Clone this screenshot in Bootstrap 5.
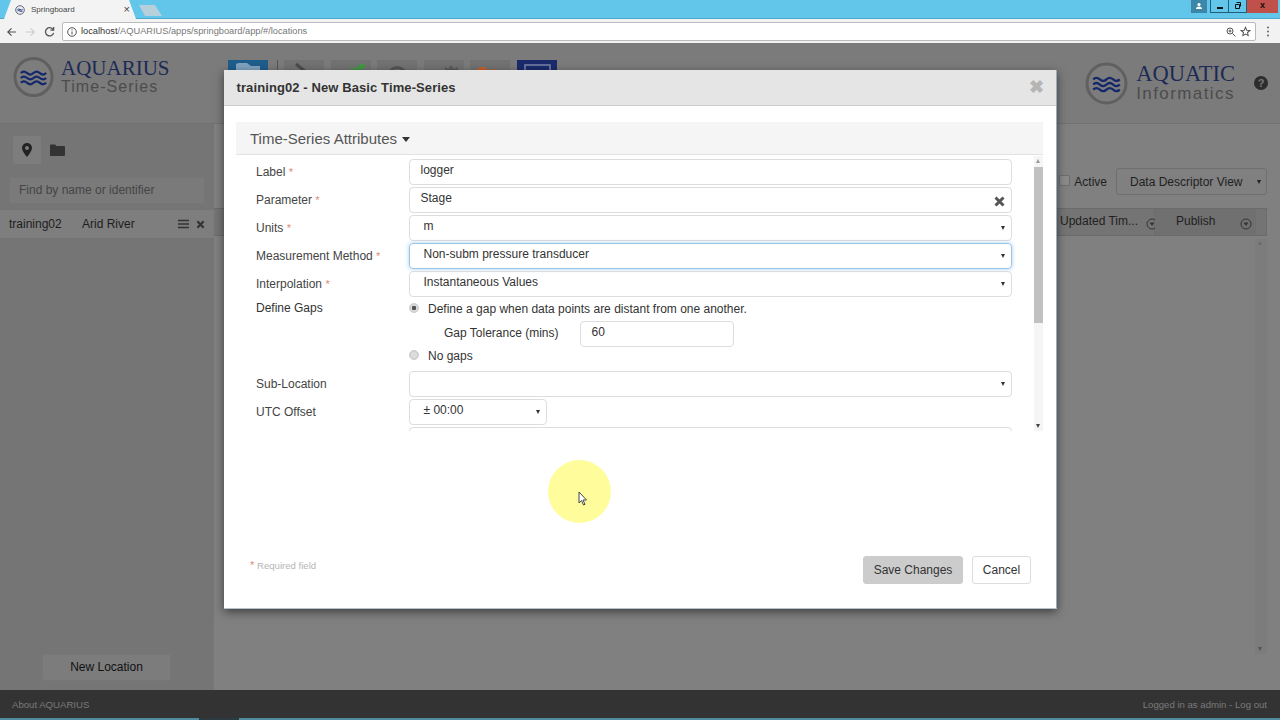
<!DOCTYPE html>
<html lang="en"><head><meta charset="utf-8"><title>Springboard</title>
<link href="https://cdn.jsdelivr.net/npm/bootstrap@5.3.0/dist/css/bootstrap.min.css" rel="stylesheet">
<style>
html,body{height:720px;overflow:hidden}
body{font-family:"Liberation Sans",Arial,sans-serif;font-size:12px;color:#333;background:#808080;position:relative}
.tabstrip{height:19px;background:#62c6ea;position:relative;border-bottom:1px solid #4fa9cc}
.tab1{width:132px;height:19px;background:#f3f3f3;margin-left:4px;clip-path:polygon(0 100%,7px 0,125px 0,132px 100%);font-size:8px;color:#444;gap:6px;padding-left:11px}
.tabx{margin-left:auto;margin-right:6px;font-size:11px;color:#444}
.tab2{width:23px;height:11px;background:#b6cfdc;margin:5px 0 0 3px;clip-path:polygon(0 0,16px 0,23px 100%,6px 100%)}
.winbtns{position:absolute;right:2px;top:0;height:13px}
.wb{height:13px;width:18px;border:1px solid #1f5f7c;border-top:0;border-left-width:0;color:#111;font-size:9px;line-height:11px;text-align:center}
.wb-min{width:19px;border-left-width:1px}
.wb-user{width:16px;background:#3c87a8;border:0;margin-right:3px}
.wb-x{width:31px;background:#c0504a;border:0;font-weight:700}
.toolbar{height:24px;background:#f2f2f2;gap:8px;padding:1px 10px 0 6px}
.addr{flex:1;height:19px;background:#fff;border:1px solid #bbb;border-radius:2px;font-size:9.25px;color:#777;gap:4px;padding:0 4px;margin:0 2px 0 -1px}
.addr b{font-weight:400;color:#333}
.appmain{height:675px;position:relative;background:#808080}
.topbar{height:81px;flex:none;background:#7b7b7b;border-bottom:1px solid #717171;padding:0 12px 0 13px}
.brand-l{width:215px;flex:none;gap:7px;align-self:flex-start;padding-top:13px}
.brand-txt{padding-top:3px}
.brand-r{gap:8px}
.brand-t{font-family:"Liberation Serif",serif;font-size:21px;line-height:18px;color:#1d2a55}
.brand-s{font-size:16px;line-height:19px;letter-spacing:1.05px;color:#4c4c4c}
.brand-t2{font-family:"Liberation Serif",serif;font-size:22.5px;line-height:21px;color:#1d2a55}
.brand-s2{font-size:17px;line-height:20px;letter-spacing:1.4px;color:#4c4c4c}
.tiles{align-self:flex-start;padding-top:17px;gap:6.6px}
.tile{width:40px;height:40px;background:#727272;display:block}
.tile-b{background:#1f5d8c}
.tile-n{background:#1b2a6b}
.tsep{width:1px;height:20px;background:#555;margin:0 -.6px 0 2.4px}
.helpi{width:14px;height:14px;border-radius:50%;background:#2d2d2d;color:#7b7b7b;font-size:11px;font-weight:700;line-height:14px;text-align:center;margin-left:19px}
.bodywrap{height:566px;flex:none}
.sidebar{width:214px;flex:none;background:#757575;padding-top:12px;position:relative}
.sidetabs{padding-left:13px;gap:9px}
.stab{width:28px;height:28px;background:#7d7d7d;border-radius:2px}
.findbox{margin:13px 9px 6px;height:27px;background:#7a7a7a;border:1px solid #767676;border-radius:2px;color:#454545;padding:0 9px;line-height:25px}
.locrow{height:28px;background:#7e7e7e;padding:0 9px;color:#1d1d1d}
.locrow .nm{width:73px}
.x-s{margin-left:7px}
.newloc{position:absolute;left:42px;top:530px;width:129px;height:27px;background:#7c7c7c;border:1px solid #777;border-radius:2px;color:#111;text-align:center;line-height:25px}
.mainarea{flex:1;padding:44px 13px 0 0;align-items:flex-end}
.rtools{gap:4px;color:#1f1f1f}
.cb{width:11px;height:11px;background:#8a8a8a;border:1px solid #6d6d6d;border-radius:2px;margin-bottom:3px}
.ddv{width:151px;height:27px;border:1px solid #6f6f6f;border-radius:3px;padding:0 5px 0 13px;color:#1f1f1f;margin-left:5px}
.arrow-d{width:0;height:0;border:2.500px solid transparent;border-top:4px solid #222;border-bottom:0}
.gridhead{width:100%;height:28px;margin-top:13px;background:#747474;border:1px solid #6b6b6b;border-left:0;color:#1f1f1f;justify-content:flex-end;white-space:nowrap}
.gc1{width:95px;height:100%;padding-top:3px;border-right:1px solid #6c6c6c;flex:none}
.gc2{width:101px;height:100%;padding:3px 4px 0 21px;background:#707070;margin-right:10px;flex:none}
.filt{width:12px;height:12px;margin-top:6px;flex:none}
.vscroll{width:12px;height:415px;margin-top:3px;background:#7c7c7c;position:relative}
.va{position:absolute;left:3px;width:0;height:0;border:2.5px solid transparent}
.va-t{top:2px;border-bottom:4px solid #6a6a6a;border-top:0}
.va-b{bottom:3px;border-top:4px solid #555;border-bottom:0}
.footerbar{height:28px;flex:none;background:#333;color:#7a7a7a;font-size:9.6px;padding:2px 13px 0 12px}
.bstrip{height:2px;background:#4f8c9f}
.bchip{width:40px;height:2px;margin-left:199px;background:#2c3a42}
.dlg{position:absolute;left:224px;top:70px;width:833px;height:539px;background:#fff;box-shadow:0 3px 9px rgba(0,0,0,.5);border-bottom:1px solid #b5c3cc;border-right:1px solid #9ab}
.dlg-h{height:36px;background:#e5e5e5;border-bottom:1px solid #ccc;padding:0 12px 0 12.5px}
.dlg-h h5{font-size:13px;font-weight:700;margin:0;color:#333;letter-spacing:.1px}
.xbig{color:#b5b5b5;font-size:18px;font-weight:700;line-height:1;margin-top:-2px}
.sect{margin:16px 13px 0 12px;height:33px;background:#f5f5f5;border-bottom:1px solid #e3e3e3;font-size:15px;color:#555;padding:3px 0 0 14px;gap:5px}
.caretd{width:0;height:0;border:4.5px solid transparent;border-top:5px solid #333;border-bottom:0}
.scroller{height:275px;margin:1px 13px 0 12px;overflow:hidden;position:relative}
.rowf{height:28px;padding-left:20px;color:#444}
.lbl{width:153px;flex:none;padding-top:7px}
.lbl-g{padding-top:3px}
.req{color:#e0897a;font-size:11px}
.fbox{width:603px;height:26px;border:1px solid #ddd;border-radius:4px;padding:0 7px 4px 10.5px;color:#333;line-height:20px;position:relative;margin-top:3px}
.sel{padding-left:13.5px}
.focusb{border-color:#9cc4e4;box-shadow:0 0 4px rgba(102,175,233,.6)}
.arrow{position:absolute;right:6px;top:10px;width:0;height:0;border:2.500px solid transparent;border-top:4px solid #333;border-bottom:0}
.clear-x{position:absolute;right:6px;top:8px}
.radio{width:10px;height:10px;border-radius:50%;background:#ddd;border:1px solid #ccc;flex:none;box-shadow:inset 0 0 1px #999;margin-bottom:2px}
.radio-on{background:radial-gradient(circle,#555 0 2px,#e4e4e4 2.6px)}
.gaprow{padding-left:20px;color:#333;height:72px}
.grd{gap:9px}
.gr1{margin-top:4px}
.gr2{margin-top:3px}
.gtl{margin-left:35px;width:136px;margin-bottom:2px}
.gapin{width:154px;margin-top:0;padding-bottom:2px}
.utcb{width:138px}
.scrollb{position:absolute;right:0;top:0;width:9px;height:275px;background:#f5f5f5}
.sthumb{position:absolute;left:0;top:11px;width:9px;height:156px;background:#c1c1c1}
.sarr{position:absolute;left:2px;width:0;height:0;border:2.5px solid transparent}
.sarr-t{top:3px;border-bottom:4px solid #999;border-top:0}
.sarr-b{bottom:3px;border-top:4px solid #444;border-bottom:0}
.dlg-f{position:absolute;left:26px;right:0;top:486px;padding-right:25px}
.reqnote{font-size:9.6px;color:#b5b5b5;margin-top:-10px}
.btn-save{width:100px;height:28px;background:#ccc;border:1px solid #ccc;border-radius:3px;font-size:12px;color:#333;padding:0}
.btn-canc{width:59px;height:28px;background:#fff;border:1px solid #ddd;border-radius:3px;font-size:12px;color:#333;padding:0;margin-left:9px}
.spot{position:absolute;left:548px;top:460px;width:63px;height:63px;border-radius:50%;background:#fffc9c;filter:blur(.6px)}
.cursor{position:absolute;left:578px;top:491px}
</style></head><body>
<div class="tabstrip d-flex">
  <div class="tab1 d-flex align-items-center"><svg width="10" height="10" viewBox="0 0 10 10"><circle cx="5" cy="5" r="4.300" fill="#e8eef4" stroke="#667" stroke-width="1"/><path d="M2.500 4.500q1-1 2.500 0t2.500 0M2.500 6q1-1 2.500 0t2.500 0" stroke="#237" fill="none"/></svg><span>Springboard</span><span class="tabx">×</span></div>
  <div class="tab2"></div>
  <div class="winbtns d-flex">
    <div class="wb wb-user"><svg width="8" height="8" viewBox="0 0 8 8"><circle cx="4" cy="2.500" r="1.600" fill="#fff"/><path d="M1 7q0-2.500 3-2.500T7 7z" fill="#fff"/></svg></div>
    <div class="wb wb-min"><svg width="8" height="9" viewBox="0 0 8 9"><rect x="1" y="6" width="6" height="2" fill="#111"/></svg></div>
    <div class="wb"><svg width="8" height="9" viewBox="0 0 8 9"><path d="M2.500 1.500h4v4M1.500 3.500h4v4h-4z" fill="none" stroke="#111"/></svg></div>
    <div class="wb wb-x">x</div>
  </div>
</div>
<div class="toolbar d-flex align-items-center">
  <svg width="11" height="12" viewBox="0 0 12 12"><path d="M11 6H2M6 2L2 6l4 4" fill="none" stroke="#555" stroke-width="1.300"/></svg>
  <svg width="11" height="12" viewBox="0 0 12 12"><path d="M1 6h9M6 2l4 4-4 4" fill="none" stroke="#ccc" stroke-width="1.300"/></svg>
  <svg width="11" height="11" viewBox="0 0 12 12"><path d="M10 4A4.500 4.500 0 1 0 10.500 7.500M10.500 1v3.500H7" fill="none" stroke="#555" stroke-width="1.400"/></svg>
  <div class="addr d-flex align-items-center"><svg width="10" height="10" viewBox="0 0 10 10"><circle cx="5" cy="5" r="4.300" fill="none" stroke="#555"/><path d="M5 4.500v3M5 2.300v1.200" stroke="#555"/></svg><span><b>localhost</b>/AQUARIUS/apps/springboard/app/#/locations</span>
    <svg class="ms-auto" width="10" height="10" viewBox="0 0 10 10"><circle cx="4" cy="4" r="3" fill="none" stroke="#555"/><path d="M6.500 6.500L9.500 9.500M2.500 4h3M4 2.500v3" stroke="#555"/></svg>
    <svg width="11" height="11" viewBox="0 0 24 24"><path d="M12 3l2.700 6.200 6.800.6-5.100 4.500 1.500 6.600L12 17.400 6.100 20.900l1.500-6.600L2.500 9.800l6.800-.6z" fill="none" stroke="#555" stroke-width="2.200"/></svg>
  </div>
  <svg width="4" height="11" viewBox="0 0 4 11"><circle cx="2" cy="1.500" r="1" fill="#666"/><circle cx="2" cy="5.500" r="1" fill="#666"/><circle cx="2" cy="9.500" r="1" fill="#666"/></svg>
</div>
<div class="appmain d-flex flex-column">
  <div class="topbar d-flex align-items-center">
    <div class="brand-l d-flex align-items-start">
      <svg width="41" height="42" viewBox="0 0 42 42"><circle cx="21" cy="21" r="19" fill="#7d7d7d" stroke="#606060" stroke-width="3"/><path d="M8 17q3-3 6.500 0t6.500 0 6.500 0 6.500 0M8 22q3-3 6.500 0t6.500 0 6.500 0 6.500 0M8 27q3-3 6.500 0t6.500 0 6.500 0 6.500 0" fill="none" stroke="#14276b" stroke-width="2.200"/></svg>
      <div class="brand-txt"><div class="brand-t">AQUARIUS</div><div class="brand-s">Time-Series</div></div>
    </div>
    <div class="tiles d-flex align-items-start">
      <svg class="tile tile-b" viewBox="0 0 40 40"><path d="M8 5q0-2 3-2h8l4 3h9v5H8z" fill="#7fa3bf"/></svg>
      <div class="tsep"></div>
      <svg class="tile" viewBox="0 0 40 40"><path d="M12 4l10 8" stroke="#4c4c4c" stroke-width="3"/></svg>
      <svg class="tile" viewBox="0 0 40 40"><circle cx="26" cy="9" r="2.500" fill="#3f9a3f"/><circle cx="31" cy="6.500" r="3" fill="#3f9a3f"/><circle cx="21" cy="9.500" r="1.500" fill="#3f9a3f"/></svg>
      <svg class="tile" viewBox="0 0 40 40"><path d="M11 14q9-13 19 0" fill="none" stroke="#555" stroke-width="3"/></svg>
      <svg class="tile" viewBox="0 0 40 40"><path d="M21 12V7l3 2 3-4 3 4 4-2v5z" fill="#5a5a5a"/></svg>
      <svg class="tile" viewBox="0 0 40 40"><path d="M6 12q1-5 8-5l4 3 9-1-4 4H6z" fill="#c9602a"/></svg>
      <svg class="tile tile-n" viewBox="0 0 40 40"><rect x="8" y="5" width="25" height="15" fill="none" stroke="#7c86ad" stroke-width="1.500"/></svg>
    </div>
    <div class="brand-r d-flex align-items-center ms-auto">
      <svg width="43" height="43" viewBox="0 0 42 42"><circle cx="21" cy="21" r="19" fill="#7d7d7d" stroke="#606060" stroke-width="3"/><path d="M8 17q3-3 6.500 0t6.500 0 6.500 0 6.500 0M8 22q3-3 6.500 0t6.500 0 6.500 0 6.500 0M8 27q3-3 6.500 0t6.500 0 6.500 0 6.500 0" fill="none" stroke="#14276b" stroke-width="2.200"/></svg>
      <div><div class="brand-t2">AQUATIC</div><div class="brand-s2">Informatics</div></div>
    </div>
    <div class="helpi">?</div>
  </div>
  <div class="bodywrap d-flex">
    <div class="sidebar">
      <div class="sidetabs d-flex align-items-center">
        <div class="stab d-flex align-items-center justify-content-center"><svg width="10" height="14" viewBox="0 0 10 14"><path fill-rule="evenodd" d="M5 0a5 5 0 0 1 5 5c0 3-5 9-5 9S0 8 0 5a5 5 0 0 1 5-5zm0 3a2 2 0 1 0 0 4 2 2 0 0 0 0-4z" fill="#222"/></svg></div>
        <svg width="15" height="12" viewBox="0 0 15 12"><path d="M0 1.500Q0 .500 1 .500h4l1.500 1.500H14q1 0 1 1V11q0 1-1 1H1q-1 0-1-1z" fill="#333"/></svg>
      </div>
      <div class="findbox">Find by name or identifier</div>
      <div class="locrow d-flex align-items-center"><span class="nm">training02</span><span>Arid River</span>
        <svg class="ms-auto" width="11" height="10" viewBox="0 0 11 10"><path d="M0 1.500h11M0 5h11M0 8.500h11" stroke="#333" stroke-width="1.600"/></svg>
        <svg class="x-s" width="9" height="9" viewBox="0 0 10 10"><path d="M1.500 1.500l7 7M8.500 1.500l-7 7" stroke="#333" stroke-width="2.400"/></svg>
      </div>
      <div class="newloc">New Location</div>
    </div>
    <div class="mainarea d-flex flex-column">
      <div class="rtools d-flex align-items-center"><span class="cb"></span><span>Active</span>
        <div class="ddv d-flex align-items-center justify-content-between"><span>Data Descriptor View</span><span class="arrow-d"></span></div>
      </div>
      <div class="gridhead d-flex">
        <div class="gc1 d-flex align-items-start gap-2"><span>Updated Tim...</span>
        <svg class="filt" viewBox="0 0 12 12"><circle cx="6" cy="6" r="5" fill="none" stroke="#333"/><path d="M3.500 4.500h5L6 8z" fill="#333"/></svg></div>
        <div class="gc2 d-flex align-items-start justify-content-between"><span>Publish</span>
        <svg class="filt" viewBox="0 0 12 12"><circle cx="6" cy="6" r="5" fill="none" stroke="#333"/><path d="M3.500 4.500h5L6 8z" fill="#333"/></svg></div>
      </div>
      <div class="vscroll"><span class="va va-t"></span><span class="va va-b"></span></div>
    </div>
  </div>
  <div class="footerbar d-flex align-items-center justify-content-between"><span>About AQUARIUS</span><span>Logged in as admin - Log out</span></div>
</div>
<div class="bstrip"><div class="bchip"></div></div>

<div class="dlg">
  <div class="dlg-h d-flex align-items-center justify-content-between"><h5>training02 - New Basic Time-Series</h5><span class="xbig">✖</span></div>
  <div class="sect d-flex align-items-center"><span>Time-Series Attributes</span><span class="caretd"></span></div>
  <div class="scroller">
    <div class="rowf d-flex"><div class="lbl">Label <span class="req">*</span></div><div class="fbox">logger</div></div>
    <div class="rowf d-flex"><div class="lbl">Parameter <span class="req">*</span></div><div class="fbox">Stage<svg class="clear-x" width="11" height="11" viewBox="0 0 11 11"><path d="M1.500 1.500l8 8M9.500 1.500l-8 8" stroke="#555" stroke-width="3"/></svg></div></div>
    <div class="rowf d-flex"><div class="lbl">Units <span class="req">*</span></div><div class="fbox sel">m<span class="arrow"></span></div></div>
    <div class="rowf d-flex"><div class="lbl">Measurement Method <span class="req">*</span></div><div class="fbox sel focusb">Non-subm pressure transducer<span class="arrow"></span></div></div>
    <div class="rowf d-flex"><div class="lbl">Interpolation <span class="req">*</span></div><div class="fbox sel">Instantaneous Values<span class="arrow"></span></div></div>
    <div class="gaprow d-flex">
      <div class="lbl lbl-g">Define Gaps</div>
      <div class="flex-grow-1">
        <div class="d-flex align-items-center grd gr1"><span class="radio radio-on"></span><span>Define a gap when data points are distant from one another.</span></div>
        <div class="d-flex align-items-center gr2"><span class="gtl">Gap Tolerance (mins)</span><div class="fbox gapin">60</div></div>
        <div class="d-flex align-items-center grd"><span class="radio"></span><span>No gaps</span></div>
      </div>
    </div>
    <div class="rowf d-flex"><div class="lbl">Sub-Location</div><div class="fbox sel"><span class="arrow"></span></div></div>
    <div class="rowf d-flex"><div class="lbl">UTC Offset</div><div class="fbox sel utcb">± 00:00<span class="arrow"></span></div></div>
    <div class="rowf d-flex"><div class="lbl"></div><div class="fbox"></div></div>
    <div class="scrollb"><span class="sarr sarr-t"></span><div class="sthumb"></div><span class="sarr sarr-b"></span></div>
  </div>
  <div class="dlg-f d-flex justify-content-between align-items-center">
    <div class="reqnote"><span class="req">*</span> Required field</div>
    <div class="d-flex"><button class="btn btn-save">Save Changes</button><button class="btn btn-canc">Cancel</button></div>
  </div>
</div>
<div class="spot"></div>
<svg class="cursor" width="10" height="16" viewBox="0 0 10 16"><path d="M1 1v11l2.500-2.500 2 4.500 1.500-.7-2-4.300h3.500z" fill="#fff" stroke="#444"/></svg>
</body></html>
